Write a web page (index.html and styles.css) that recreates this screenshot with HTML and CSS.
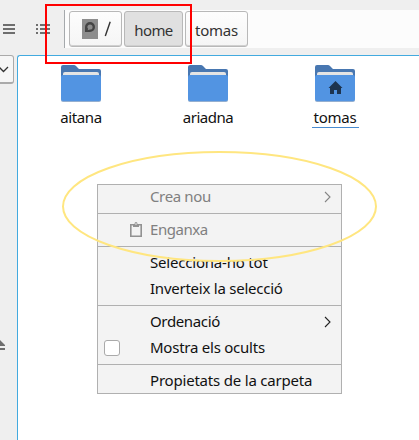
FILE: index.html
```
<!DOCTYPE html>
<html lang="ca">
<head>
<meta charset="utf-8">
<title>home</title>
<link rel="stylesheet" href="styles.css">
</head>
<body>
<div class="window">
  <header class="toolbar">
    <svg class="tools" width="64" height="40" viewBox="0 0 64 40" fill="#6e6e6e" shape-rendering="crispEdges">
      <path d="M3 13h12v2H3zM3 17h12v2H3zM3 21h12v2H3zM36 13h2v2h-2zM40 13h10v2H40zM36 17h2v2h-2zM40 17h10v2H40zM36 21h2v2h-2zM40 21h10v2H40z"/>
    </svg>
    <nav class="path">
      <div class="crumb root">
        <svg width="16" height="20" viewBox="0 0 16 20"><path fill="#8d8d8d" d="M0 0h16v20H0z"/><path fill="#444" fill-rule="evenodd" d="M3 13V8A5 5 0 1 1 8 13zM8 5.400a2.600 2.600 0 0 0-1.800 4.500L5.500 11.300 8 10.600a2.600 2.600 0 0 0 0-5.200z"/></svg>
        <svg class="slash" width="8" height="16" viewBox="0 0 8 16"><path d="M6.200 .8L1.300 15" stroke="#333" stroke-width="1.400"/></svg>
      </div>
      <div class="crumb current"><span class="t-home">home</span></div>
      <div class="crumb tomas"><span class="t-tomas">tomas</span></div>
    </nav>
  </header>
  <div class="body">
    <aside class="side">
      <div class="combo"><svg width="13" height="28" viewBox="0 0 13 28"><path d="M-1 11l4.500 4.500L8 11" fill="none" stroke="#333" stroke-width="1.300"/></svg></div>
      <svg class="eject" width="6" height="12" viewBox="0 0 6 12" fill="#6e6e6e"><path d="M-1 -1L5 5V6H-1zM-1 8h6v2h-6z"/></svg>
    </aside>
    <main class="pane">
      <div class="folder">
        <svg width="40" height="37" viewBox="0 0 40 37"><path fill="#4877b1" d="M0 2q0-2 2-2h11q1 0 2 1l3 3h20q2 0 2 2v8H0z"/><path fill="#e4e4e4" d="M2 9q0-2 2-2h32q2 0 2 2v3H2z"/><path fill="#94afd0" d="M0 12h40v23q0 2-2 2H2q-2 0-2-2z"/><path fill="#5294e2" d="M0 12q0-2 2-2h36q2 0 2 2v22q0 2-2 2H2q-2 0-2-2z"/></svg>
        <span class="name t-aitana">aitana</span>
      </div>
      <div class="folder">
        <svg width="40" height="37" viewBox="0 0 40 37"><path fill="#4877b1" d="M0 2q0-2 2-2h11q1 0 2 1l3 3h20q2 0 2 2v8H0z"/><path fill="#e4e4e4" d="M2 9q0-2 2-2h32q2 0 2 2v3H2z"/><path fill="#94afd0" d="M0 12h40v23q0 2-2 2H2q-2 0-2-2z"/><path fill="#5294e2" d="M0 12q0-2 2-2h36q2 0 2 2v22q0 2-2 2H2q-2 0-2-2z"/></svg>
        <span class="name t-ariadna">ariadna</span>
      </div>
      <div class="folder">
        <svg width="40" height="37" viewBox="0 0 40 37"><path fill="#4877b1" d="M0 2q0-2 2-2h11q1 0 2 1l3 3h20q2 0 2 2v8H0z"/><path fill="#e4e4e4" d="M2 9q0-2 2-2h32q2 0 2 2v3H2z"/><path fill="#94afd0" d="M0 12h40v23q0 2-2 2H2q-2 0-2-2z"/><path fill="#5294e2" d="M0 12q0-2 2-2h36q2 0 2 2v22q0 2-2 2H2q-2 0-2-2z"/><path fill="#1d344f" d="M20.500 16L27.500 23H26v6h-4v-4h-3v4h-4v-6h-1.500z"/></svg>
        <span class="name t-tomas focused">tomas</span>
      </div>
    </main>
  </div>
  <div class="menu">
    <div class="item short off"><span class="t-crea">Crea nou</span><svg class="arrow" width="7" height="12" viewBox="0 0 7 12"><path d="M1 1l5 5-5 5"/></svg></div>
    <div class="sep"></div>
    <div class="item off"><svg class="clip" width="12" height="15" viewBox="0 0 12 15"><path fill="none" stroke="#929292" stroke-width="1.600" d="M.8 2.800h10.400v11.400H.8z"/><path fill="#929292" d="M3 2h1.500a1.500 2 0 0 1 3 0H9v3H3z"/><circle cx="6" cy="2" r=".8" fill="#f3f3f3"/></svg><span class="t-enganxa">Enganxa</span></div>
    <div class="sep"></div>
    <div class="item"><span class="t-sel">Selecciona-ho tot</span></div>
    <div class="item"><span class="t-inv">Inverteix la selecció</span></div>
    <div class="sep"></div>
    <div class="item"><span class="t-ord">Ordenació</span><svg class="arrow" width="7" height="12" viewBox="0 0 7 12"><path d="M1 1l5 5-5 5"/></svg></div>
    <div class="item"><i class="check"></i><span class="t-mostra">Mostra els ocults</span></div>
    <div class="sep"></div>
    <div class="item short"><span class="t-prop">Propietats de la carpeta</span></div>
  </div>
  <svg class="marks" width="419" height="440" viewBox="0 0 419 440" fill="none">
    <path d="M46 5h145v58H46z" stroke="#f00" stroke-width="2"/>
    <ellipse cx="219.500" cy="206.500" rx="156.500" ry="54.500" stroke="#ffe680" stroke-width="2"/>
  </svg>
</div>
</body>
</html>
```
FILE: styles.css
```
* { box-sizing: border-box; }
body { margin: 0; background: #efefef; font: 15px/20px "Noto Sans", "Open Sans", sans-serif; color: #111; }
svg { display: block; flex: none; }
.window { position: relative; width: 419px; height: 440px; overflow: hidden; display: flex; flex-direction: column; }
.toolbar { height: 55px; padding-top: 10px; display: flex; flex: none; }
.tools { margin-top: 1px; }
.path { flex: 1; height: 38px; display: flex; gap: 2px; padding: 1px 0 1px 4px; background: #fcfcfc; border-left: 1px solid #a5a9ac; }
.crumb { height: 36px; display: flex; align-items: center; justify-content: center; border: 1px solid #b8b8b8; border-radius: 3px; background: linear-gradient(#fdfdfd, #f5f5f5); color: #333; box-shadow: inset 0 -1px #d0d0d0; }
.crumb.root { width: 53px; gap: 6px; padding-left: 2px; }
.crumb.current { width: 59px; background: #e0e0e0; }
.crumb.tomas { width: 63px; }
.crumb span { margin-top: 1px; }
.body { flex: 1; display: flex; }
.side { width: 17px; flex: none; display: flex; flex-direction: column; justify-content: space-between; }
.combo { width: 14px; height: 29px; border: 1px solid #aaa; border-left: 0; border-bottom-width: 2px; border-radius: 0 3px 3px 0; background: #f6f6f6; }
.eject { margin-bottom: 88px; }
.pane { flex: 1; display: flex; align-items: flex-start; border: 1px solid #43aadf; border-width: 1px 0 0 1px; border-top-left-radius: 3px; background: #fff; padding-top: 9px; }
.folder { width: 126px; flex: none; display: flex; flex-direction: column; align-items: center; }
.folder:nth-child(2) { width: 128px; }
.name { margin-top: 5px; height: 20px; }
.focused { height: 21px; width: 47px; text-align: center; border-bottom: 1px solid #488bd0; }
.menu { position: absolute; left: 97px; top: 184px; width: 245px; height: 210px; border: 1px solid #b0b0b0; background: #f3f3f3; }
.item { position: relative; height: 26px; display: flex; align-items: center; padding: 0 10px 0 52px; }
.item.short { height: 25px; }
.item span { white-space: nowrap; margin-top: -2px; }
.item.short.off span { margin-top: -3px; }
.off { color: #808080; }
.sep { height: 1px; margin: 3px 0; background: #b0b0b0; }
.arrow { margin-left: auto; fill: none; stroke: #222; stroke-width: 1.1; }
.off .arrow { stroke: #858585; }
.item.short .arrow { margin-top: -1px; }
.clip { position: absolute; left: 32px; top: 5px; }
.check { position: absolute; left: 6px; top: 5px; width: 16px; height: 16px; border: 1px solid #aaa; border-radius: 3px; background: #fff; }
.marks { position: absolute; left: 0; top: 0; }

/* Tracking per label */
.t-home { letter-spacing: -.6px; }
.t-aitana, .t-crea, .t-ord { letter-spacing: -.36px; }
.t-ariadna, .t-enganxa { letter-spacing: -.45px; }
.t-sel { letter-spacing: -.2px; }
.t-inv, .t-mostra { letter-spacing: -.24px; }
.t-prop { letter-spacing: -.2px; }
.t-tomas { letter-spacing: -.2px; }
```
